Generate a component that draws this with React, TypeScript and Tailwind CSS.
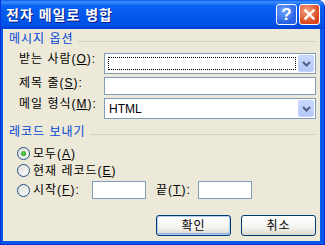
import React from 'react';

const Radio = ({ checked }: { checked?: boolean }) => (
  <svg width="13" height="13" viewBox="0 0 13 13" className="shrink-0">
    <defs>
      <linearGradient id="radioFill" x1="0" y1="0" x2="1" y2="1">
        <stop offset="0" stopColor="#DCDCD7" />
        <stop offset="1" stopColor="#FFFFFF" />
      </linearGradient>
      <radialGradient id="radioDot" cx="0.4" cy="0.4" r="0.6">
        <stop offset="0" stopColor="#6BDB67" />
        <stop offset="1" stopColor="#21A121" />
      </radialGradient>
    </defs>
    <circle cx="6.5" cy="6.5" r="6" fill="url(#radioFill)" stroke="#1C5180" />
    {checked && <circle cx="6.5" cy="6.5" r="2.5" fill="url(#radioDot)" />}
  </svg>
);

const DropButton = () => (
  <div className="w-[16px] self-stretch rounded-[2px] border border-[#C3D3FD] bg-[linear-gradient(to_bottom,#C9D8FC,#B4C8F6)] flex items-center justify-center">
    <svg width="9" height="6" viewBox="0 0 9 6">
      <path d="M1 1 L4.5 4.5 L8 1" fill="none" stroke="#4D6185" strokeWidth="2" />
    </svg>
  </div>
);

const GroupHeader = ({ title }: { title: string }) => (
  <div className="flex items-start pl-[6px] pr-[4px]">
    <span className="text-[12px] leading-[14px] text-[#0046D5]">{title}</span>
    <div className="flex-1 h-px bg-[#D0D0BF] ml-[4px] mt-[9px]" />
  </div>
);

const Label = ({ text, k }: { text: string; k: string }) => (
  <span className="text-[12px] leading-[12px] text-black whitespace-nowrap">
    {text}(<u className="underline-offset-1">{k}</u>):
  </span>
);

const XpButton = ({ label, isDefault }: { label: string; isDefault?: boolean }) => (
  <button
    className={`w-[75px] h-[21px] rounded-[3px] border border-[#003C74] bg-[linear-gradient(to_bottom,#FFFFFF,#F3F3EF_60%,#DCD8CE)] text-[12px] tracking-[1px] text-black flex items-center justify-center ${
      isDefault ? 'shadow-[inset_0_0_0_1px_#B5CEF7,inset_0_-1px_0_1px_#89ADE4]' : ''
    }`}
  >
    {label}
  </button>
);

export default function App() {
  return (
    <div className="w-[325px] h-[245px] flex flex-col bg-[#0B57EC] border-x border-b border-[#0831D9] rounded-tr-[7px] overflow-hidden font-['Liberation_Sans','Noto_Sans_CJK_KR',sans-serif]">
      {/* 제목 표시줄 */}
      <div className="h-[29px] shrink-0 flex items-center justify-between pl-[5px] pr-[4px] bg-[linear-gradient(to_bottom,#0A5CF0_0%,#3D8EFF_7%,#0A61F2_20%,#0558EC_55%,#0052E6_85%,#003ED6_100%)]">
        <span className="text-white font-bold text-[14px] leading-[16px] tracking-[1px] [text-shadow:1px_1px_0_#0A1A80]">
          전자 메일로 병합
        </span>
        <div className="flex gap-[2px]">
          <div className="w-[21px] h-[21px] rounded-[3px] border border-white bg-[radial-gradient(circle_at_35%_30%,#6FA3FF,#2A62E4_70%)] flex items-center justify-center text-white font-bold text-[17px] leading-none">
            ?
          </div>
          <div className="w-[21px] h-[21px] rounded-[3px] border border-white bg-[radial-gradient(circle_at_35%_30%,#F3A27F,#D9471E_70%)] flex items-center justify-center">
            <svg width="11" height="11" viewBox="0 0 11 11">
              <path d="M1.5 1.5 L9.5 9.5 M9.5 1.5 L1.5 9.5" stroke="white" strokeWidth="2.4" strokeLinecap="square" />
            </svg>
          </div>
        </div>
      </div>

      {/* 본문 */}
      <div className="flex-1 ml-[2px] mr-[4px] mb-[3px] bg-[#ECE9D8] flex flex-col pt-[3px] text-black tracking-[1px]">
        <GroupHeader title="메시지 옵션" />

        <div className="grid grid-cols-[85px_212px] gap-y-[3px] pl-[16px] mt-[7px]">
          <Label text="받는 사람" k="O" />
          <div className="h-[21px] border border-[#7F9DB9] bg-white flex p-[1px]">
            <div className="flex-1 p-[2px]">
              <div className="w-full h-full border border-dotted border-black" />
            </div>
            <DropButton />
          </div>

          <Label text="제목 줄" k="S" />
          <div className="h-[18px] border border-[#7F9DB9] bg-white" />

          <Label text="메일 형식" k="M" />
          <div className="h-[21px] border border-[#7F9DB9] bg-white flex p-[1px]">
            <div className="flex-1 flex items-center pl-[3px] text-[12px] tracking-normal">HTML</div>
            <DropButton />
          </div>
        </div>

        <div className="mt-[6px]">
          <GroupHeader title="레코드 보내기" />
        </div>

        <div className="flex flex-col pl-[14px] mt-[6px] text-[12px]">
          <div className="h-[17px] flex items-center gap-[3px]">
            <Radio checked />
            <span>
              모두(<u className="underline-offset-1">A</u>)
            </span>
          </div>
          <div className="h-[17px] flex items-center gap-[3px]">
            <Radio />
            <span>
              현재 레코드(<u className="underline-offset-1">E</u>)
            </span>
          </div>
          <div className="h-[18px] flex items-center gap-[3px] mt-[2px]">
            <Radio />
            <span className="w-[56px]">
              시작(<u className="underline-offset-1">F</u>):
            </span>
            <div className="w-[54px] h-[18px] border border-[#7F9DB9] bg-white" />
            <span className="w-[39px] ml-[7px]">
              끝(<u className="underline-offset-1">T</u>):
            </span>
            <div className="w-[54px] h-[18px] border border-[#7F9DB9] bg-white" />
          </div>
        </div>

        <div className="flex justify-end gap-[10px] pr-[4px] mt-[16px]">
          <XpButton label="확인" isDefault />
          <XpButton label="취소" />
        </div>
      </div>
    </div>
  );
}
